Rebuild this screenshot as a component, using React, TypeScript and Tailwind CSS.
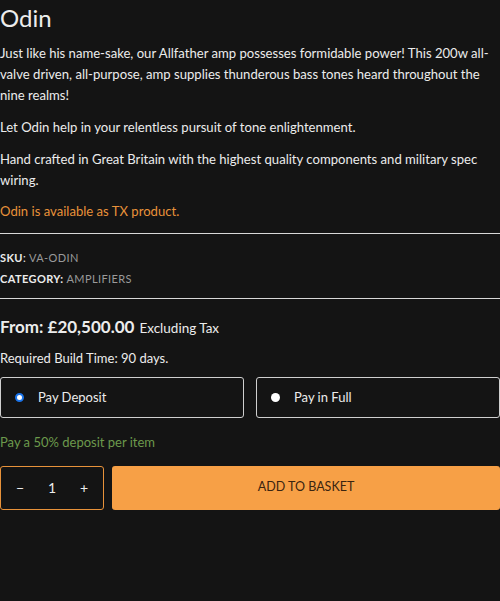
const App = () => {
  return (
    <div className="h-[601px] w-[500px] overflow-hidden bg-[#141414] text-[#ececec] [font-family:Lato,'Noto_Sans',sans-serif]">
      <h1 className="pt-[3px] text-[24px] leading-[30px] font-normal">Odin</h1>
      <div className="mt-[10px] text-[13.1px] leading-[21px]">
        <p>
          Just like his name-sake, our Allfather amp possesses formidable power! This 200w all-valve
          driven, all-purpose, amp supplies thunderous bass tones heard throughout the nine realms!
        </p>
        <p className="mt-[11px]">Let Odin help in your relentless pursuit of tone enlightenment.</p>
        <p className="mt-[11px]">
          Hand crafted in Great Britain with the highest quality components and military spec wiring.
        </p>
        <p className="mt-[10px] text-[#e8923a]">Odin is available as TX product.</p>
      </div>
      <div className="mt-[11px] border-t border-[#d8d8d8]"></div>
      <div className="pt-[13px] pb-[9px] text-[11px] leading-[21px] tracking-[0.4px]">
        <div>
          <span className="font-bold">SKU</span>: <span className="text-[#9a9a9a]">VA-ODIN</span>
        </div>
        <div>
          <span className="font-bold">CATEGORY:</span> <span className="text-[#9a9a9a]">AMPLIFIERS</span>
        </div>
      </div>
      <div className="border-t border-[#d8d8d8]"></div>
      <div className="mt-[15px] flex items-baseline gap-[5px]">
        <span className="text-[17px] font-bold">From: £20,500.00</span>
        <span className="text-[13.5px]">Excluding Tax</span>
      </div>
      <div className="mt-[9px] text-[13px]">Required Build Time: 90 days.</div>
      <div className="mt-[9px] grid grid-cols-2 gap-[12px]">
        <label className="flex h-[41px] items-center rounded-[3px] border border-[#cfcfcf] pl-[14px] text-[13px]">
          <span className="flex h-[9px] w-[9px] items-center justify-center rounded-full border-[2px] border-[#1a73e8] bg-white"></span>
          <span className="ml-[14px]">Pay Deposit</span>
        </label>
        <label className="flex h-[41px] items-center rounded-[3px] border border-[#cfcfcf] pl-[14px] text-[13px]">
          <span className="h-[9px] w-[9px] rounded-full bg-white"></span>
          <span className="ml-[14px]">Pay in Full</span>
        </label>
      </div>
      <div className="mt-[15px] text-[13px] text-[#6c9a4c]">Pay a 50% deposit per item</div>
      <div className="mt-[13px] flex gap-[8px]">
        <div className="flex h-[44px] w-[104px] items-center justify-between rounded-[3px] border border-[#e8923a] px-[15px] text-[14px]">
          <span>−</span>
          <span>1</span>
          <span>+</span>
        </div>
        <button className="h-[44px] flex-1 rounded-[3px] bg-[#f7a046] text-[12.5px] text-[#3a2410]">
          ADD TO BASKET
        </button>
      </div>
    </div>
  );
};

export default App;
